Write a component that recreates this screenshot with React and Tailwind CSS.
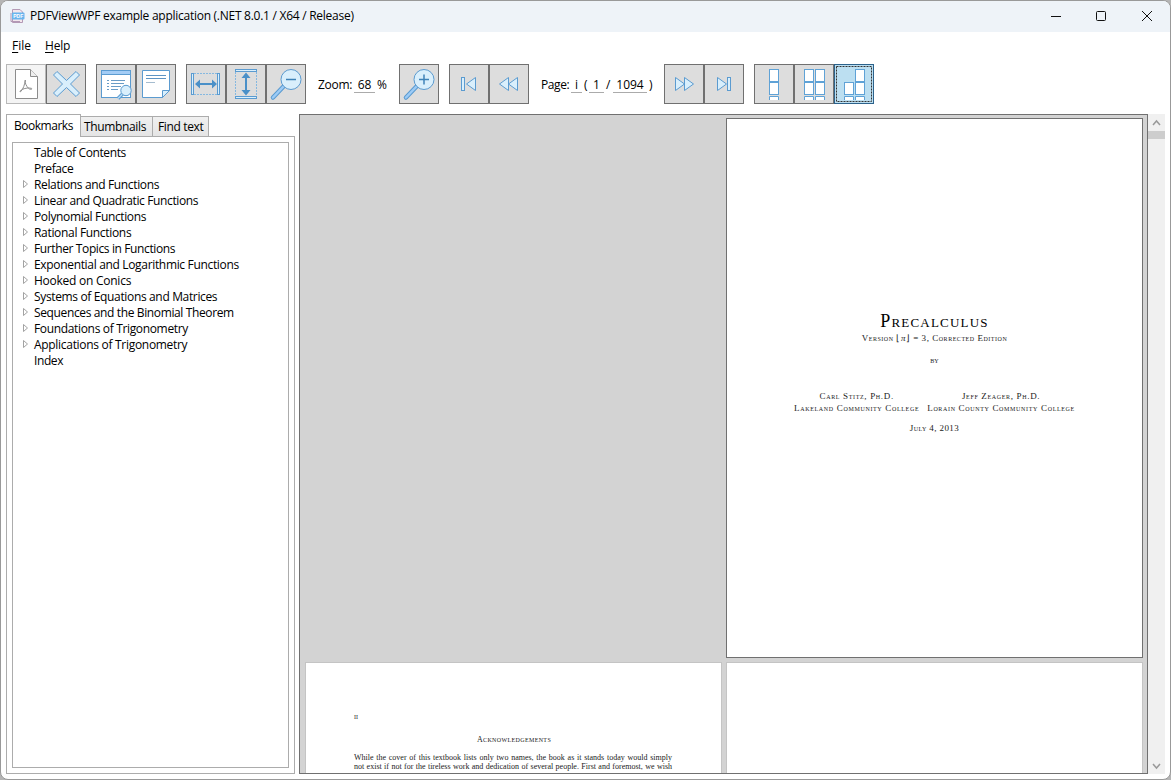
import React from "react";

const ST = "#5b9bd0";
const LT = "#d9effc";

function ToolButton({ label, tone = "bg-[#dddddd] border-[#707070]", children }) {
  return (
    <button aria-label={label} className={`h-10 w-10 shrink-0 border ${tone}`}>
      <svg width="38" height="38" viewBox="0 0 38 38" fill="none">{children}</svg>
    </button>
  );
}

const PdfIcon = () => (
  <g stroke="#8c8c8c">
    <path d="M8.500 4.500H23.500L30.500 11.500V33.500H8.500Z" fill="#fff" />
    <path d="M23.500 4.500V11.500H30.500" fill="#eee" />
    <path d="M18.300 15C17.800 19 16.500 24 13.500 26.800C12.500 27.500 13 25.300 15.500 24.300C18.500 23 22 22.600 24.500 23.400C26 24.300 23 25 21.500 23.300C19.600 21.300 17.500 18 18.300 15Z" />
  </g>
);

const CloseIcon = () => (
  <path d="M10 6.500L19.500 15.500L29 6.500L32.500 10L23.500 19L32.500 28L29 31.500L19.500 22.500L10 31.500L6.500 28L15.500 19L6.500 10Z" fill={LT} stroke={ST} />
);

const FindIcon = () => (
  <g stroke={ST}>
    <rect x="4.500" y="5.500" width="29" height="27" fill="#fff" />
    <rect x="4.500" y="5.500" width="29" height="4" fill="#a3ccf5" />
    <path d="M10 15.500H12M14 15.500H28M10 18.500H12M14 18.500H27M10 21.500H12M14 21.500H24M10 24.500H12M14 24.500H21" stroke="#6a9cc6" />
    <path d="M25.500 29L21 33.500" stroke={ST} strokeWidth="3.500" />
    <path d="M25.500 29L21 33.500" stroke="#b8dcf8" strokeWidth="1.500" />
    <circle cx="29" cy="25.500" r="5.200" fill={LT} />
  </g>
);

const NoteIcon = () => (
  <g stroke={ST}>
    <path d="M5.500 5.500H32.500V25.500L25.500 32.500H5.500Z" fill="#fff" />
    <path d="M25.500 32.500V25.500H32.500Z" fill={LT} />
    <path d="M9 10.500H29M9 13.500H29" stroke="#5d94c4" />
    <path d="M9 17.500H18" stroke="#a5bccf" />
  </g>
);

const FitWidthIcon = () => (
  <g stroke={ST}>
    <path d="M7 8.500H31M7 29.500H31" stroke="#85b8e0" strokeDasharray="2 1" />
    <rect x="4.500" y="8.500" width="2" height="21" fill={LT} />
    <rect x="30.500" y="8.500" width="2" height="21" fill={LT} />
    <path d="M10 19H28" stroke="#4a90c8" strokeWidth="2" />
    <path d="M8 19L13 14.500V23.500ZM30 19L25 14.500V23.500Z" fill="#4a90c8" stroke="none" />
  </g>
);

const FitHeightIcon = () => (
  <g stroke={ST}>
    <path d="M8.500 7V31M29.500 7V31" stroke="#85b8e0" strokeDasharray="2 1" />
    <rect x="8.500" y="4.500" width="21" height="2" fill={LT} />
    <rect x="8.500" y="31.500" width="21" height="2" fill={LT} />
    <path d="M19 10V28" stroke="#4a90c8" strokeWidth="2" />
    <path d="M19 7.500L14.500 13H23.500ZM19 30.500L14.500 25H23.500Z" fill="#4a90c8" stroke="none" />
  </g>
);

const ZoomIcon = ({ plus }) => (
  <g stroke={ST}>
    <path d="M16.500 21.500L6 32.500" strokeWidth="4.500" strokeLinecap="round" />
    <path d="M16.500 21.500L6 32.500" stroke="#9ccbf6" strokeWidth="2.500" strokeLinecap="round" />
    <circle cx="24" cy="14.500" r="10" fill={LT} />
    <path d={plus ? "M19 14.500H29M24 9.500V19.500" : "M19 14.500H29"} stroke="#3f83b8" strokeWidth="1.500" />
  </g>
);

const FirstIcon = () => (
  <g stroke={ST} fill={LT}>
    <rect x="11.500" y="12.500" width="3" height="13" />
    <path d="M25.500 12.500V25.500L16.500 19Z" />
  </g>
);
const PrevIcon = () => (
  <g stroke={ST} fill={LT}>
    <path d="M18.500 12.500V25.500L9.500 19ZM27.500 12.500V25.500L18.500 19Z" />
  </g>
);
const NextIcon = () => (
  <g stroke={ST} fill={LT}>
    <path d="M10.500 12.500V25.500L19.500 19ZM19.500 12.500V25.500L28.500 19Z" />
  </g>
);
const LastIcon = () => (
  <g stroke={ST} fill={LT}>
    <path d="M12.500 12.500V25.500L21.500 19Z" />
    <rect x="22.500" y="12.500" width="3" height="13" />
  </g>
);

const Column = ({ x, start = 0 }) => (
  <g stroke="#5fa2d6" fill="#fff">
    {start === 0 && <rect x={x} y="4.500" width="9" height="12" />}
    <rect x={x} y="17.500" width="9" height="12" />
    <path d={`M${x} 35V31.500H${x + 9}V35`} />
  </g>
);

const Underlined = ({ children, className }) => (
  <span className={`h-[16px] border-b border-[#ababab] text-center leading-[15px] ${className}`}>{children}</span>
);

const bookmarks = [
  ["Table of Contents", false, "tracking-[-0.38px]"],
  ["Preface", false, "tracking-[-0.4px]"],
  ["Relations and Functions", true, "tracking-[-0.36px]"],
  ["Linear and Quadratic Functions", true, "tracking-[-0.37px]"],
  ["Polynomial Functions", true, "tracking-[-0.36px]"],
  ["Rational Functions", true, "tracking-[-0.32px]"],
  ["Further Topics in Functions", true, "tracking-[-0.38px]"],
  ["Exponential and Logarithmic Functions", true, "tracking-[-0.33px]"],
  ["Hooked on Conics", true, "tracking-[-0.25px]"],
  ["Systems of Equations and Matrices", true, "tracking-[-0.35px]"],
  ["Sequences and the Binomial Theorem", true, "tracking-[-0.37px]"],
  ["Foundations of Trigonometry", true, "tracking-[-0.34px]"],
  ["Applications of Trigonometry", true, "tracking-[-0.3px]"],
  ["Index", false, "tracking-[-0.4px]"],
];

function TitleBar() {
  return (
    <header className="flex h-[31px] shrink-0 items-center bg-[#eef3f8] pl-[9px] pb-px">
      <svg width="15" height="15" viewBox="0 0 15 15" fill="none">
        <path d="M2.500 3V.500H10L12.500 3V13.500H2.500Z" fill="#f3e7ed" stroke="#b399b5" />
        <path d="M1 4V12.500H10" stroke="#b399b5" />
        <rect x="2" y="3.500" width="12.500" height="7" rx="1" fill="#69b5ee" />
        <text x="3.200" y="9" fontSize="5" fontWeight="bold" fontFamily="Liberation Sans" fill="#fff">PDF</text>
      </svg>
      <span className="ml-[5px] text-[12px] tracking-[-0.265px]">PDFViewWPF example application (.NET 8.0.1 / X64 / Release)</span>
      <svg className="mb-px ml-auto mr-[14px]" width="106" height="12" viewBox="0 0 106 12" fill="none" stroke="#111">
        <path d="M1 6.500H11" />
        <rect x="46.500" y="1.500" width="9" height="9" rx="1" />
        <path d="M92 1L102 11M102 1L92 11" />
      </svg>
    </header>
  );
}

export default function App() {
  return (
    <div className="h-[780px] w-[1171px] overflow-hidden bg-[#b5b5b5] font-['Open_Sans','Noto_Sans',sans-serif] text-[12px] text-black">
      <div className="flex h-[780px] w-[1171px] flex-col overflow-hidden rounded-[8px] border border-[#999] bg-white">
        <TitleBar />
        <nav className="flex h-[27px] shrink-0 items-center gap-[14px] pl-[11px] leading-4">
          <span><u className="underline-offset-2">F</u>ile</span>
          <span className="tracking-[-0.2px]"><u className="underline-offset-2">H</u>elp</span>
        </nav>
        <div className="mt-[5px] flex h-10 shrink-0 pl-[5px]">
          <ToolButton label="Open" tone="bg-[#f4f4f4] border-[#b8b8b8]"><PdfIcon /></ToolButton>
          <ToolButton label="Close"><CloseIcon /></ToolButton>
          <div className="ml-[10px] flex">
            <ToolButton label="Find"><FindIcon /></ToolButton>
            <ToolButton label="Notes"><NoteIcon /></ToolButton>
          </div>
          <div className="ml-[10px] flex">
            <ToolButton label="Fit width"><FitWidthIcon /></ToolButton>
            <ToolButton label="Fit height"><FitHeightIcon /></ToolButton>
            <ToolButton label="Zoom out"><ZoomIcon /></ToolButton>
          </div>
          <div className="flex w-[93px] items-center pl-[12px] pt-px">
            <span className="w-[36px] whitespace-nowrap tracking-[-0.3px]">Zoom:</span>
            <Underlined className="w-[21px]">68</Underlined>
            <span className="ml-[2px]">%</span>
          </div>
          <ToolButton label="Zoom in"><ZoomIcon plus /></ToolButton>
          <div className="ml-[10px] flex">
            <ToolButton label="First page"><FirstIcon /></ToolButton>
            <ToolButton label="Previous page"><PrevIcon /></ToolButton>
          </div>
          <div className="flex w-[135px] items-center pl-[12px] pt-px">
            <span className="w-[30px] whitespace-nowrap tracking-[-0.4px]">Page:</span>
            <Underlined className="w-[11px]">i</Underlined>
            <span className="w-[7px] pl-[2px]">(</span>
            <Underlined className="w-[15px]">1</Underlined>
            <span className="w-[9px] pl-[2px]">/</span>
            <Underlined className="w-[34px]">1094</Underlined>
            <span className="pl-[2px]">)</span>
          </div>
          <ToolButton label="Next page"><NextIcon /></ToolButton>
          <ToolButton label="Last page"><LastIcon /></ToolButton>
          <div className="ml-[10px] flex">
            <ToolButton label="Single column"><Column x={14.5} /></ToolButton>
            <ToolButton label="Two columns"><Column x={9.5} /><Column x={20.5} /></ToolButton>
            <ToolButton label="Two columns with cover" tone="bg-[#bcdff1] border-[#2c628b]">
              <rect x="1.500" y="1.500" width="35" height="35" stroke="#333" strokeDasharray="2 1" />
              <Column x={9.5} start={1} /><Column x={20.5} />
            </ToolButton>
          </div>
        </div>
        <main className="mt-[10px] flex h-[660px] shrink-0 pl-[5px]">
          <aside className="flex w-[289px] flex-col">
            <div className="z-10 -mb-px flex h-[23px] items-end leading-4">
              <div className="h-[23px] w-[75px] border border-b-0 border-[#acacac] bg-white pl-[7px] pt-[3px] whitespace-nowrap tracking-[-0.48px]">Bookmarks</div>
              <div className="mb-px h-[20px] w-[72px] border border-b-0 border-l-0 border-[#acacac] bg-gradient-to-b from-[#f0f0f0] to-[#e5e5e5] pl-[3px] pt-[2px] whitespace-nowrap tracking-[-0.36px]">Thumbnails</div>
              <div className="mb-px h-[20px] w-[56px] border border-b-0 border-l-0 border-[#acacac] bg-gradient-to-b from-[#f0f0f0] to-[#e5e5e5] pl-[5px] pt-[2px] whitespace-nowrap tracking-[-0.35px]">Find text</div>
            </div>
            <div className="flex-1 border border-[#acacac] p-[5px]">
              <div className="h-full border border-[#acacac] pt-[2px]">
                {bookmarks.map(([name, open, tracking]) => (
                  <div key={name} className="flex h-4 items-center pl-[9px] leading-4">
                    <svg width="12" height="10" viewBox="0 0 12 10" fill="none">
                      {open && <path d="M1.500 .500V7.500L5.500 4Z" stroke="#999" strokeWidth=".9" />}
                    </svg>
                    <span className={`whitespace-nowrap ${tracking}`}>{name}</span>
                  </div>
                ))}
              </div>
            </div>
          </aside>
          <section className="ml-[4px] flex h-[660px] w-[849px] flex-col gap-[4px] overflow-hidden border border-[#707070] bg-[#d3d3d3] pl-[5px] pt-[3px] font-['Liberation_Serif',serif] text-[#222]">
            <div className="ml-[421px] flex h-[540px] w-[417px] shrink-0 flex-col items-center border border-[#707070] bg-white pt-[191px] whitespace-nowrap [font-variant:small-caps]">
              <h1 className="h-[23px] text-[18px] leading-[23px] tracking-[1.2px] text-black">Precalculus</h1>
              <p className="h-[11px] text-[9px] leading-[11px] tracking-[0.53px]">Version ⌊<i className="[font-variant:normal]">π</i>⌋ = 3, Corrected Edition</p>
              <p className="mt-[11px] h-[11px] text-[9px] leading-[11px]">by</p>
              <div className="mt-[25px] flex gap-[8px] text-center text-[9px] leading-[11.500px] tracking-[0.66px]">
                <div>Carl Stitz, Ph.D.<br />Lakeland Community College</div>
                <div>Jeff Zeager, Ph.D.<br />Lorain County Community College</div>
              </div>
              <p className="mt-[9px] text-[9px] leading-[11px] tracking-[0.4px]">July 4, 2013</p>
            </div>
            <div className="flex shrink-0 gap-[4px]">
              <div className="h-[540px] w-[417px] border border-[#c4c4c4] bg-white pl-[48px] pt-[49px] text-[8px] leading-[9.300px]">
                <p className="h-[10px] [font-variant:small-caps]">ii</p>
                <p className="mt-[13px] h-[10px] w-[320px] text-center tracking-[0.36px] [font-variant:small-caps]">Acknowledgements</p>
                <div className="mt-[8px] w-[318px] whitespace-nowrap [text-align-last:justify]">
                  <p>While the cover of this textbook lists only two names, the book as it stands today would simply</p>
                  <p>not exist if not for the tireless work and dedication of several people. First and foremost, we wish</p>
                  <p>to thank our families for their patience and support during the creative process. We would also</p>
                </div>
              </div>
              <div className="h-[540px] w-[417px] border border-[#c4c4c4] bg-white" />
            </div>
          </section>
          <div className="flex w-[17px] flex-col bg-[#f0f0f0]">
            <svg width="17" height="17" viewBox="0 0 17 17" fill="none"><path d="M5 11L8.500 7L12 11" stroke="#999" strokeWidth="1.500" /></svg>
            <div className="h-[8px] bg-[#cdcdcd]" />
            <svg className="mt-auto" width="17" height="17" viewBox="0 0 17 17" fill="none"><path d="M5 7L8.500 11L12 7" stroke="#999" strokeWidth="1.500" /></svg>
          </div>
        </main>
      </div>
    </div>
  );
}
